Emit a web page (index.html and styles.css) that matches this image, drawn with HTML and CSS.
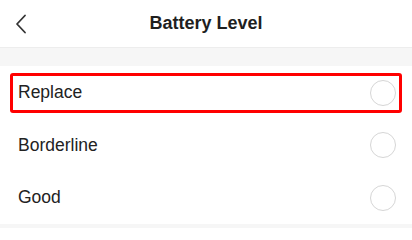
FILE: index.html
```html
<!DOCTYPE html>
<html>
<head>
<meta charset="utf-8">
<link rel="stylesheet" href="styles.css">
</head>
<body>
<div class="page">
  <header class="header">
    <span class="back">
      <svg width="12" height="20" viewBox="0 0 12 20"><path d="M10 1.5 L2 10 L10 18.5" fill="none" stroke="#333" stroke-width="1.8" stroke-linecap="round" stroke-linejoin="round"/></svg>
    </span>
    <h1 class="title">Battery Level</h1>
  </header>
  <div class="band"></div>
  <ul class="list">
    <li class="row selected"><span class="label">Replace</span><span class="radio"></span></li>
    <li class="row"><span class="label">Borderline</span><span class="radio"></span></li>
    <li class="row"><span class="label">Good</span><span class="radio"></span></li>
  </ul>
  <div class="band bottom"></div>
</div>
</body>
</html>
```
FILE: styles.css
```css
html, body { margin: 0; padding: 0; background: #fff; }
body { font-family: "Liberation Sans", Arial, sans-serif; color: #222; }
.page { width: 412px; height: 228px; overflow: hidden; display: flex; flex-direction: column; }
.header { height: 48px; flex: none; display: flex; align-items: center; justify-content: center; position: relative; border-bottom: 1px solid #ededed; box-sizing: border-box; }
.back { position: absolute; left: 15px; top: 14px; width: 12px; height: 20px; display: flex; }
.title { margin: 0; font-size: 18px; font-weight: bold; color: #1f1f1f; }
.band { height: 18px; flex: none; background: #f6f6f6; }
.band.bottom { flex: 1; }
.list { list-style: none; margin: 0; padding: 0; }
.row { height: 52.5px; display: flex; align-items: center; justify-content: space-between; padding: 1px 16px 0 18px; box-sizing: border-box; position: relative; }
.label { font-size: 17.5px; color: #222; }
.radio { width: 24px; height: 24px; border: 1.5px solid #d6d6d6; border-radius: 50%; }
.selected::after { content: ""; position: absolute; left: 10px; right: 10px; top: 7px; bottom: 6px; border: 3px solid #ff0000; border-radius: 3px; }
```
